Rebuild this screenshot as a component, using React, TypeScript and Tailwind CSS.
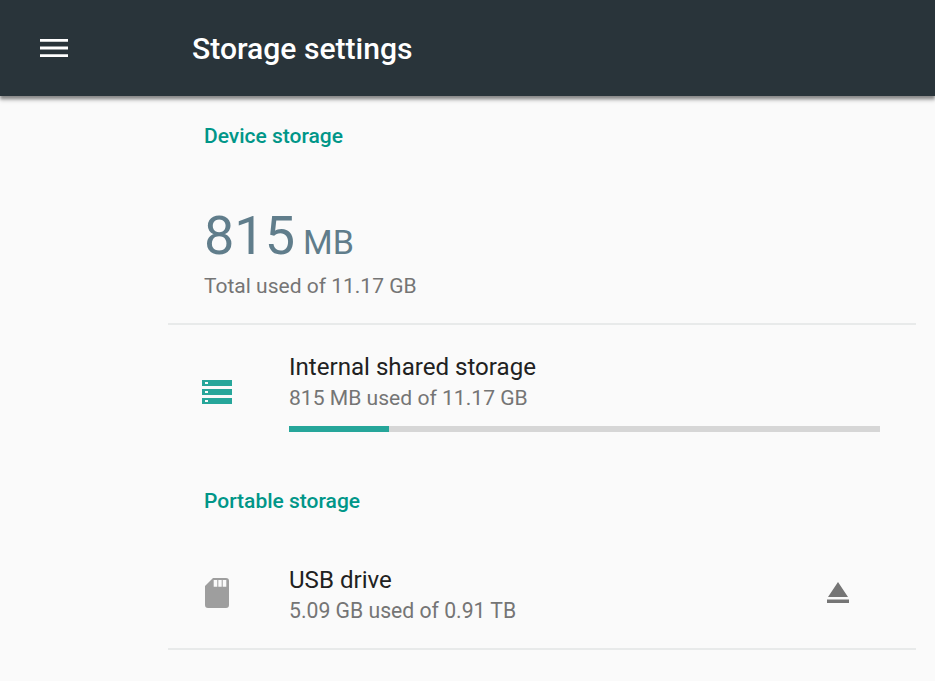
import React from 'react';

const App: React.FC = () => {
  return (
    <div className="w-[935px] h-[681px] overflow-hidden bg-[#fafafa] flex flex-col font-['Roboto',sans-serif]">
      {/* App bar */}
      <header className="h-[96px] shrink-0 bg-[#29343a] flex items-center shadow-[0_3px_3px_rgba(0,0,0,0.38),0_5px_4px_rgba(0,0,0,0.12)] relative z-10">
        <div className="w-[192px] pl-[40px] flex items-center">
          <svg width="28" height="20" viewBox="0 0 28 20" className="block">
            <path d="M0 1h28v2.8H0zM0 8.6h28v2.8H0zM0 16.2h28V19H0z" fill="#ffffff" />
          </svg>
        </div>
        <h1 className="text-[30.1px] font-medium text-white leading-none pt-[2px]">Storage settings</h1>
      </header>

      <main className="pl-[168px] pr-[19px] flex flex-col">
        {/* Device storage */}
        <div className="pl-[36px] h-[229px] border-b-2 border-[#e8eaea] flex flex-col">
          <h2 className="text-[21px] font-medium text-[#009688] leading-[24px] mt-[28px]">Device storage</h2>
          <div className="flex items-baseline text-[#607d8b] mt-[60px] leading-none">
            <span className="text-[54px] leading-[56px]">815</span>
            <span className="text-[34px] leading-[56px] ml-[8px]">MB</span>
          </div>
          <div className="text-[21px] text-[#757575] leading-[24px] mt-[4px]">Total used of 11.17 GB</div>
        </div>

        {/* Internal shared storage */}
        <div className="flex h-[128px]">
          <div className="w-[121px] pl-[34px] pt-[55px]">
            <svg width="30" height="24" viewBox="0 0 30 24" className="block">
              <path fillRule="evenodd" fill="#26a69a" d="M0 0h30v6H0zM3 2v2h3V2zM0 9h30v6H0zM3 11v2h3v-2zM0 18h30v6H0zM3 20v2h3v-2z" />
            </svg>
          </div>
          <div className="flex-1 pr-[36px] pt-[28px]">
            <div className="text-[24.1px] text-[#212121] leading-[28px]">Internal shared storage</div>
            <div className="text-[21.1px] text-[#757575] leading-[24px] mt-[5px]">815 MB used of 11.17 GB</div>
            <div className="h-[6px] bg-[#d6d6d6] mt-[16px]">
              <div className="h-full w-[100px] bg-[#26a69a]" />
            </div>
          </div>
        </div>

        {/* Portable storage */}
        <div className="pl-[36px]">
          <h2 className="text-[21px] font-medium text-[#009688] leading-[24px] mt-[36px]">Portable storage</h2>
        </div>

        <div className="flex h-[136px] border-b-2 border-[#e8eaea] mt-[1px]">
          <div className="w-[121px] pl-[37px] pt-[64px]">
            <svg width="24" height="30" viewBox="0 0 24 30" className="block">
              <path fillRule="evenodd" fill="#9e9e9e" d="M8 0h13a3 3 0 0 1 3 3v24a3 3 0 0 1-3 3H3a3 3 0 0 1-3-3V8zM8.700 2v6.700h3.600V2zM13.300 2v6.700h3.400V2zM17.700 2v6.700h3.600V2z" />
            </svg>
          </div>
          <div className="flex-1 pt-[52px] flex justify-between">
            <div>
              <div className="text-[24.1px] text-[#212121] leading-[28px]">USB drive</div>
              <div className="text-[21.2px] text-[#757575] leading-[24px] mt-[5px]">5.09 GB used of 0.91 TB</div>
            </div>
            <div className="pr-[67px] pt-[16px]">
              <svg width="22" height="21" viewBox="0 0 22 21" className="block">
                <path fill="#757575" d="M11 0l10 15H1zM0 17.500h22V21H0z" />
              </svg>
            </div>
          </div>
        </div>
      </main>
    </div>
  );
};

export default App;
